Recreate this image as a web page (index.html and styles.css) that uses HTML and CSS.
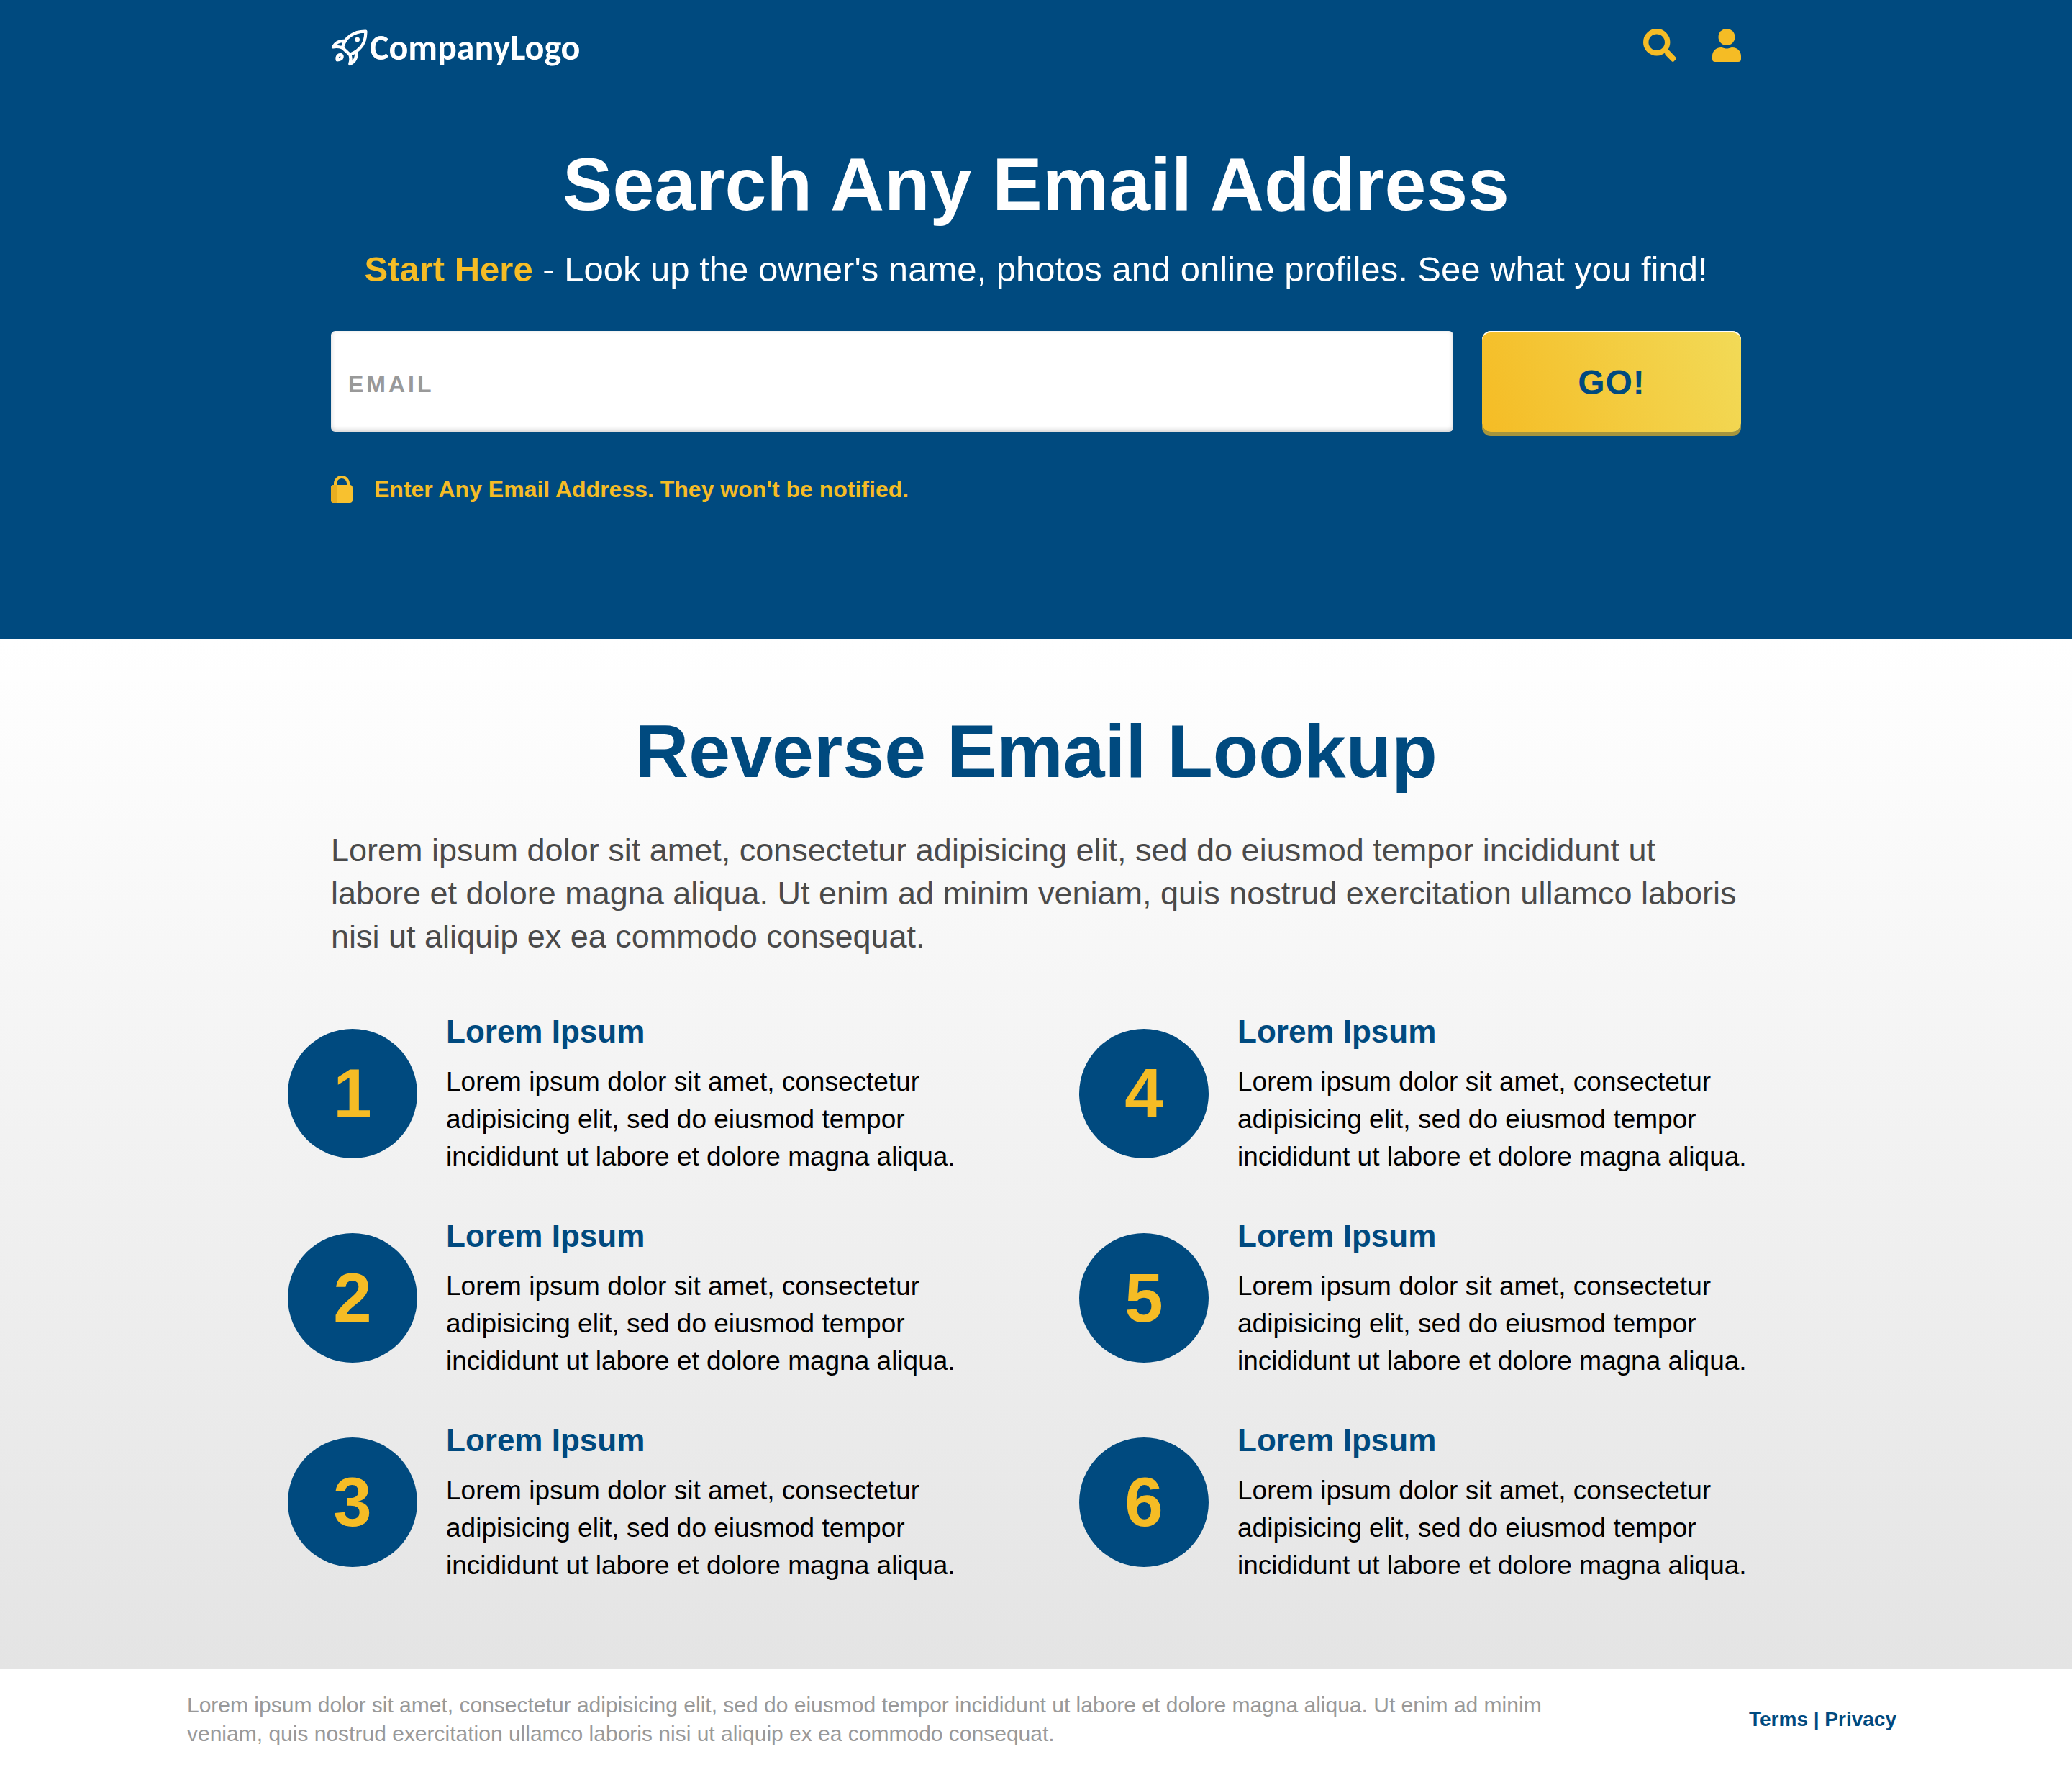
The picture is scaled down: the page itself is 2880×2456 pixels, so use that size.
FILE: index.html
```html
<!DOCTYPE html>
<html lang="en">
<head>
<meta charset="utf-8">
<meta name="viewport" content="width=device-width, initial-scale=1">
<title>Search Any Email Address</title>
<link rel="stylesheet" href="styles.css">
</head>
<body>
<div class="hero">
  <header class="topbar wrap">
    <a class="logo" href="#">
      <svg class="logo-mark" viewBox="58 56 156 156" aria-hidden="true">
        <g fill="none" stroke="#fff" stroke-width="13" stroke-linejoin="round" stroke-linecap="round">
          <path d="M106 135C114 94 152 66 203 67C204 112 186 144 137 164Z"/>
          <path d="M117 107C92 105 78 113 67 132C80 129 94 131 106 135"/>
          <path d="M163 153C167 178 156 194 137 203C141 190 142 176 137 164"/>
          <path d="M84 186C81 172 88 164 98 164C109 166 109 184 84 186Z"/>
        </g>
        <circle cx="168" cy="101" r="10" fill="#fff"/>
      </svg>
      <span>CompanyLogo</span>
    </a>
    <nav class="actions">
      <a href="#search" aria-label="Search">
        <svg width="46" height="46" viewBox="0 0 46 46"><circle cx="18.7" cy="18.7" r="15" fill="none" stroke="#f5bc25" stroke-width="7.4"/><path fill="#f5bc25" d="M30 33V31L33 30L36 30L45.300 39.700Q46.600 41.200 45.300 42.600L42.700 45.200Q41.200 46.600 39.700 45.300L31 36.500Q30 35.500 30 33Z"/></svg>
      </a>
      <a href="#account" aria-label="Account">
        <svg width="40" height="46" viewBox="0 0 40 46" fill="#f5bc25"><circle cx="20" cy="11.500" r="11.500"/><path d="M0 38C0 31 5 26 12 26C15 26 16 27.500 20 27.500S25 26 28 26C35 26 40 31 40 38V42Q40 46 36 46H4Q0 46 0 42Z"/></svg>
      </a>
    </nav>
  </header>
  <main class="wrap">
    <h1>Search Any Email Address</h1>
    <p class="lead"><strong>Start Here</strong> - Look up the owner's name, photos and online profiles. See what you find!</p>
    <form class="search">
      <input type="email" placeholder="EMAIL" aria-label="Email">
      <button type="submit">GO!</button>
    </form>
    <p class="note">
      <svg width="30" height="38" viewBox="0 0 30 38" aria-hidden="true"><path d="M6 15V11A9 9 0 0 1 24 11V15" fill="none" stroke="#f8c12f" stroke-width="4"/><rect y="13" width="30" height="25" rx="4" fill="#f8c12f"/><path d="M9 13H4Q0 13 0 17V34Q0 38 4 38H9Z" fill="#e8ae20"/></svg>
      <span>Enter Any Email Address. They won't be notified.</span>
    </p>
  </main>
</div>
<section class="about">
  <div class="wrap">
    <h2>Reverse Email Lookup</h2>
    <p class="intro">Lorem ipsum dolor sit amet, consectetur adipisicing elit, sed do eiusmod tempor incididunt ut labore et dolore magna aliqua. Ut enim ad minim veniam, quis nostrud exercitation ullamco laboris nisi ut aliquip ex ea commodo consequat.</p>
    <ol class="features">
      <li><span class="num">1</span><div><h3>Lorem Ipsum</h3><p>Lorem ipsum dolor sit amet, consectetur adipisicing elit, sed do eiusmod tempor incididunt ut labore et dolore magna aliqua.</p></div></li>
      <li><span class="num">2</span><div><h3>Lorem Ipsum</h3><p>Lorem ipsum dolor sit amet, consectetur adipisicing elit, sed do eiusmod tempor incididunt ut labore et dolore magna aliqua.</p></div></li>
      <li><span class="num">3</span><div><h3>Lorem Ipsum</h3><p>Lorem ipsum dolor sit amet, consectetur adipisicing elit, sed do eiusmod tempor incididunt ut labore et dolore magna aliqua.</p></div></li>
      <li><span class="num">4</span><div><h3>Lorem Ipsum</h3><p>Lorem ipsum dolor sit amet, consectetur adipisicing elit, sed do eiusmod tempor incididunt ut labore et dolore magna aliqua.</p></div></li>
      <li><span class="num">5</span><div><h3>Lorem Ipsum</h3><p>Lorem ipsum dolor sit amet, consectetur adipisicing elit, sed do eiusmod tempor incididunt ut labore et dolore magna aliqua.</p></div></li>
      <li><span class="num">6</span><div><h3>Lorem Ipsum</h3><p>Lorem ipsum dolor sit amet, consectetur adipisicing elit, sed do eiusmod tempor incididunt ut labore et dolore magna aliqua.</p></div></li>
    </ol>
  </div>
</section>
<footer class="footer">
  <p>Lorem ipsum dolor sit amet, consectetur adipisicing elit, sed do eiusmod tempor incididunt ut labore et dolore magna aliqua. Ut enim ad minim veniam, quis nostrud exercitation ullamco laboris nisi ut aliquip ex ea commodo consequat.</p>
  <nav class="legal"><a href="#terms">Terms</a> | <a href="#privacy">Privacy</a></nav>
</footer>
</body>
</html>
```
FILE: styles.css
```css
:root {
  --blue: #004a7f;
  --yellow: #f5bc25;
}

* {
  box-sizing: border-box;
}

body {
  margin: 0;
  background: #fff;
  color: #000;
  font-family: "Helvetica Neue", "Liberation Sans", Arial, sans-serif;
}

h1, h2, h3, p, ol {
  margin: 0;
  padding: 0;
}

a {
  color: inherit;
  text-decoration: none;
}

svg {
  display: block;
  flex: none;
}

.wrap {
  max-width: 1960px;
  margin: 0 auto;
}

.hero {
  padding-bottom: 188px;
  background: var(--blue);
  color: #fff;
}

.topbar {
  display: flex;
  justify-content: space-between;
  align-items: flex-start;
  height: 128px;
  padding-top: 40px;
}

.logo {
  display: flex;
  align-items: center;
  gap: 2px;
  font: bold 50px/52px Carlito, Calibri, "Open Sans", sans-serif;
}

.logo-mark {
  width: 52px;
  height: 52px;
}

.actions {
  display: flex;
  gap: 50px;
}

h1, h2 {
  font-size: 104px;
  line-height: 120px;
  text-align: center;
}

h1 {
  padding-top: 68px;
}

.lead {
  padding-top: 30px;
  font-size: 49px;
  line-height: 56px;
  text-align: center;
}

.lead strong {
  color: var(--yellow);
}

.search {
  display: flex;
  gap: 40px;
  padding-top: 58px;
}

.search input {
  flex: 1;
  min-width: 0;
  height: 140px;
  padding: 8px 24px 0;
  border: 0;
  border-radius: 6px;
  background: #fff;
  box-shadow: inset 0 -2px 6px rgba(0, 0, 0, 0.2);
  color: #333;
  font: bold 32px/40px "Liberation Sans", Arial, sans-serif;
  letter-spacing: 4px;
}

.search input::placeholder {
  color: #999;
  opacity: 1;
}

.search button {
  width: 360px;
  height: 140px;
  padding: 4px 0 0;
  border: 0;
  border-radius: 12px;
  background: linear-gradient(70deg, #f5bc25, #f2da57);
  box-shadow: inset 0 2px 0 #fff, 0 6px 0 #a6953d;
  color: var(--blue);
  font: bold 48px/56px "Liberation Sans", Arial, sans-serif;
  letter-spacing: 1px;
}

.note {
  display: flex;
  align-items: center;
  gap: 30px;
  padding-top: 60px;
  color: var(--yellow);
  font-size: 32px;
  font-weight: bold;
  line-height: 40px;
}

.about {
  padding: 96px 0 118px;
  background: linear-gradient(#fff, #e4e4e4);
}

h2, h3 {
  color: var(--blue);
}

.intro {
  padding-top: 48px;
  color: #4a4a4a;
  font-size: 45px;
  line-height: 60px;
}

.features {
  display: grid;
  grid-template-rows: repeat(3, auto);
  grid-template-columns: 1fr 1fr;
  grid-auto-flow: column;
  column-gap: 160px;
  row-gap: 58px;
  margin: 76px -20px 0 -60px;
  list-style: none;
}

.features li {
  display: flex;
  gap: 40px;
}

.num {
  display: flex;
  flex: none;
  align-items: center;
  justify-content: center;
  width: 180px;
  height: 180px;
  margin-top: 22px;
  border-radius: 50%;
  background: var(--blue);
  color: var(--yellow);
  font-size: 96px;
  font-weight: bold;
}

.features h3 {
  font-size: 44px;
  line-height: 52px;
}

.features p {
  padding-top: 18px;
  font-size: 37px;
  line-height: 52px;
}

.footer {
  display: flex;
  justify-content: space-between;
  align-items: center;
  max-width: 2392px;
  margin: 0 auto;
  padding: 30px 0 26px 16px;
}

.footer p {
  max-width: 1940px;
  color: #999;
  font-size: 30px;
  line-height: 40px;
}

.legal {
  color: var(--blue);
  font-size: 28px;
  font-weight: bold;
  line-height: 40px;
}
```
